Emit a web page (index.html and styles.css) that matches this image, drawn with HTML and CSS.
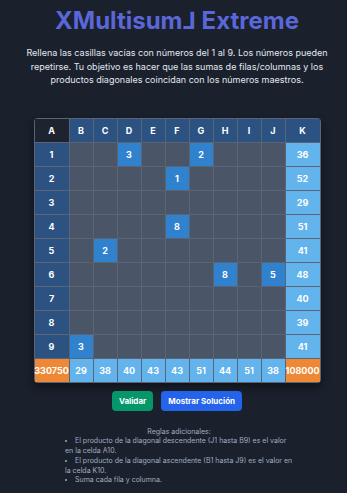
FILE: index.html
```html
<!DOCTYPE html>
<html>
  <head>
    <meta charset='utf-8'>
    <meta name="viewport" content="width=device-width,initial-scale=1.0">
    <title>XMultisum⅃ Extreme</title>
    <link rel="stylesheet" href="styles.css">
  </head>
  <body>
    <main class="game">
      <h1 class="title">XMultisum⅃ Extreme</h1>
      <p class="intro">
        Rellena las casillas vacías con números del 1 al 9. Los números pueden
        repetirse. Tu objetivo es hacer que las sumas de filas/columnas y los
        productos diagonales coincidan con los números maestros.
      </p>

      <div class="board">
        <!-- header row -->
        <div class="cell corner">A</div>
        <div class="cell head">B</div>
        <div class="cell head">C</div>
        <div class="cell head">D</div>
        <div class="cell head">E</div>
        <div class="cell head">F</div>
        <div class="cell head">G</div>
        <div class="cell head">H</div>
        <div class="cell head">I</div>
        <div class="cell head">J</div>
        <div class="cell head">K</div>
        <!-- row 1 -->
        <div class="cell head">1</div>
        <div class="cell"></div><div class="cell"></div>
        <div class="cell given">3</div>
        <div class="cell"></div><div class="cell"></div>
        <div class="cell given">2</div>
        <div class="cell"></div><div class="cell"></div><div class="cell"></div>
        <div class="cell sum">36</div>
        <!-- row 2 -->
        <div class="cell head">2</div>
        <div class="cell"></div><div class="cell"></div><div class="cell"></div><div class="cell"></div>
        <div class="cell given">1</div>
        <div class="cell"></div><div class="cell"></div><div class="cell"></div><div class="cell"></div>
        <div class="cell sum">52</div>
        <!-- row 3 -->
        <div class="cell head">3</div>
        <div class="cell"></div><div class="cell"></div><div class="cell"></div><div class="cell"></div><div class="cell"></div>
        <div class="cell"></div><div class="cell"></div><div class="cell"></div><div class="cell"></div>
        <div class="cell sum">29</div>
        <!-- row 4 -->
        <div class="cell head">4</div>
        <div class="cell"></div><div class="cell"></div><div class="cell"></div><div class="cell"></div>
        <div class="cell given">8</div>
        <div class="cell"></div><div class="cell"></div><div class="cell"></div><div class="cell"></div>
        <div class="cell sum">51</div>
        <!-- row 5 -->
        <div class="cell head">5</div>
        <div class="cell"></div>
        <div class="cell given">2</div>
        <div class="cell"></div><div class="cell"></div><div class="cell"></div><div class="cell"></div>
        <div class="cell"></div><div class="cell"></div><div class="cell"></div>
        <div class="cell sum">41</div>
        <!-- row 6 -->
        <div class="cell head">6</div>
        <div class="cell"></div><div class="cell"></div><div class="cell"></div><div class="cell"></div>
        <div class="cell"></div><div class="cell"></div>
        <div class="cell given">8</div>
        <div class="cell"></div>
        <div class="cell given">5</div>
        <div class="cell sum">48</div>
        <!-- row 7 -->
        <div class="cell head">7</div>
        <div class="cell"></div><div class="cell"></div><div class="cell"></div><div class="cell"></div><div class="cell"></div>
        <div class="cell"></div><div class="cell"></div><div class="cell"></div><div class="cell"></div>
        <div class="cell sum">40</div>
        <!-- row 8 -->
        <div class="cell head">8</div>
        <div class="cell"></div><div class="cell"></div><div class="cell"></div><div class="cell"></div><div class="cell"></div>
        <div class="cell"></div><div class="cell"></div><div class="cell"></div><div class="cell"></div>
        <div class="cell sum">39</div>
        <!-- row 9 -->
        <div class="cell head">9</div>
        <div class="cell given">3</div>
        <div class="cell"></div><div class="cell"></div><div class="cell"></div><div class="cell"></div>
        <div class="cell"></div><div class="cell"></div><div class="cell"></div><div class="cell"></div>
        <div class="cell sum">41</div>
        <!-- totals -->
        <div class="cell master">330750</div>
        <div class="cell sum">29</div>
        <div class="cell sum">38</div>
        <div class="cell sum">40</div>
        <div class="cell sum">43</div>
        <div class="cell sum">43</div>
        <div class="cell sum">51</div>
        <div class="cell sum">44</div>
        <div class="cell sum">51</div>
        <div class="cell sum">38</div>
        <div class="cell master">108000</div>
      </div>

      <div class="actions">
        <button class="btn btn-check">Validar</button>
        <button class="btn btn-solve">Mostrar Solución</button>
      </div>

      <div class="rules">
        <p>Reglas adicionales:</p>
        <ul>
          <li>El producto de la diagonal descendente (J1 hasta B9) es el valor en la celda A10.</li>
          <li>El producto de la diagonal ascendente (B1 hasta J9) es el valor en la celda K10.</li>
          <li>Suma cada fila y columna.</li>
        </ul>
      </div>
    </main>
  </body>
</html>
```

FILE: styles.css
```css
html, body, h1, p, ul {
    margin: 0;
    padding: 0;
}
body {
    background-color: #1a202c;
    color: #e2e8f0;
    font-family: Inter, "Noto Sans", sans-serif;
}
.game {
    padding: 5px 4px 0 11px;
    text-align: center;
}
.title {
    font-size: 24px;
    line-height: 32px;
    font-weight: 700;
    color: #5a67d8;
}
.intro {
    margin: 9px auto 0;
    font-size: 9px;
    line-height: 13.5px;
    color: #e2e8f0;
}
.board {
    display: inline-grid;
    grid-template-columns: 34px repeat(9, 23px) 34px;
    grid-auto-rows: 23px;
    gap: 1px;
    padding: 1px;
    margin-top: 31px;
    background-color: #5a6475;
    border-radius: 4px;
    box-shadow: 0 4px 8px rgba(0, 0, 0, 0.45);
    overflow: hidden;
}
.cell {
    display: flex;
    align-items: center;
    justify-content: center;
    background-color: #4a5568;
    color: #fff;
    font-size: 9px;
    font-weight: 700;
}
.cell.corner {
    background-color: #1e2330;
}
.cell.head {
    background-color: #2c5282;
}
.cell.given {
    background-color: #3182ce;
}
.cell.sum {
    background-color: #63b3ed;
}
.cell.master {
    background-color: #ed8936;
}
.actions {
    display: flex;
    justify-content: center;
    gap: 8px;
    margin-top: 8px;
}
.btn {
    height: 20px;
    padding: 0 7px;
    border: none;
    border-radius: 4px;
    color: #fff;
    font-family: Inter, "Noto Sans", sans-serif;
    font-size: 8px;
    font-weight: 700;
}
.btn-check {
    background-color: #059669;
}
.btn-solve {
    background-color: #2563eb;
}
.rules {
    box-sizing: border-box;
    width: 232px;
    margin: 16px auto 0;
    padding-left: 4px;
    font-size: 7px;
    line-height: 9.8px;
    color: #a0aec0;
}
.rules ul {
    list-style-position: inside;
    text-align: left;
}
```
